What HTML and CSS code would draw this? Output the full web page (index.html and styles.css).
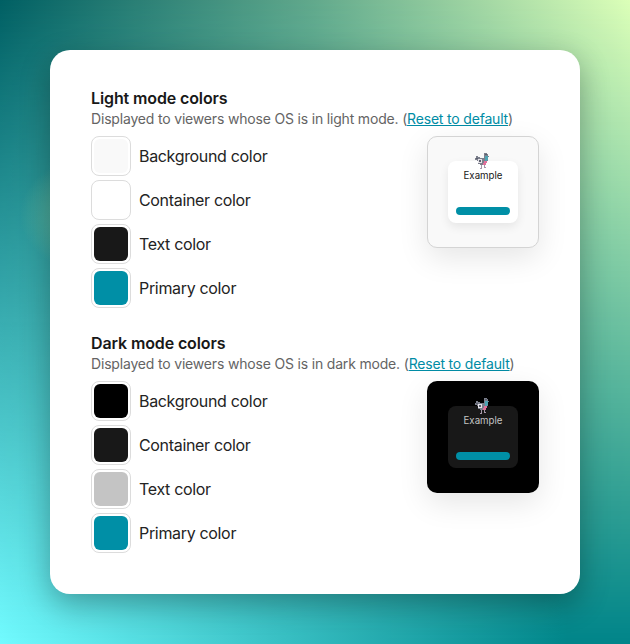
FILE: index.html
```html
<!DOCTYPE html>
<html lang="en">
<head>
<meta charset="utf-8">
<title>Theme colors</title>
<link rel="stylesheet" href="styles.css">
</head>
<body>
<svg class="defs" width="0" height="0" aria-hidden="true">
  <symbol id="pigeon" viewBox="0 0 16 16">
    <path fill="#7b7f8c" d="M9 0h3v1h1v2h1v1h-1v4h-1v2h-1v2H5v-1H3V8H2V7H0V5h1V3h2v1h2v1h4V1h0z"/>
    <path fill="#4fa3b2" d="M10 3h3v4h-1v1H10V6h0z"/>
    <path fill="#e0709a" d="M9 8h3v2h-1v2H8v-2h1z"/>
    <path fill="#e6e3e9" d="M3 6h4v4H3z"/>
    <path fill="#5b5f6c" d="M4 7h2v2H4zM10 1h2v1h-2zM1 5h2v1H1z"/>
    <path fill="#a596a8" d="M6 12h1v3H6zM9 12h1v2H9zM5 15h2v1H5zM9 14h2v1H9z"/>
  </symbol>
</svg>
<main class="card">
  <section class="group">
    <h2 class="title">Light mode colors</h2>
    <p class="hint">Displayed to viewers whose OS is in light mode. (<a class="reset" href="#">Reset to default</a>)</p>
    <div class="body">
      <ul class="rows">
        <li class="row"><span class="swatch"><span class="fill c-f9"></span></span>Background color</li>
        <li class="row"><span class="swatch"><span class="fill c-ff"></span></span>Container color</li>
        <li class="row"><span class="swatch"><span class="fill c-18"></span></span>Text color</li>
        <li class="row"><span class="swatch"><span class="fill c-pr"></span></span>Primary color</li>
      </ul>
      <div class="preview preview-light">
        <div class="mini">
          <svg class="bird"><use href="#pigeon"/></svg>
          <span class="mini-text">Example</span>
          <span class="mini-btn"></span>
        </div>
      </div>
    </div>
  </section>
  <section class="group">
    <h2 class="title">Dark mode colors</h2>
    <p class="hint">Displayed to viewers whose OS is in dark mode. (<a class="reset" href="#">Reset to default</a>)</p>
    <div class="body">
      <ul class="rows">
        <li class="row"><span class="swatch"><span class="fill c-00"></span></span>Background color</li>
        <li class="row"><span class="swatch"><span class="fill c-18"></span></span>Container color</li>
        <li class="row"><span class="swatch"><span class="fill c-c4"></span></span>Text color</li>
        <li class="row"><span class="swatch"><span class="fill c-pr"></span></span>Primary color</li>
      </ul>
      <div class="preview preview-dark">
        <div class="mini">
          <svg class="bird"><use href="#pigeon"/></svg>
          <span class="mini-text">Example</span>
          <span class="mini-btn"></span>
        </div>
      </div>
    </div>
  </section>
</main>
</body>
</html>
```
FILE: styles.css
```css
* { box-sizing: border-box; }
html, body { margin: 0; height: 100%; }
body {
  position: relative;
  width: 630px;
  height: 644px;
  overflow: hidden;
  padding: 50px;
  font-family: Inter, "Liberation Sans", sans-serif;
  color: #181818;
  background: linear-gradient(to right, #72fbff 0%, #38c0c4 45%, #00858a 90%, #00858a 100%);
}
body::before {
  content: "";
  position: absolute;
  inset: 0;
  background: linear-gradient(to right, #005f63 0%, #62a98c 50%, #dcffb8 100%);
  -webkit-mask-image: linear-gradient(to bottom, #000 0%, transparent 100%);
  mask-image: linear-gradient(to bottom, #000 0%, transparent 100%);
}
body::after {
  content: "";
  position: absolute;
  inset: 0;
  background: radial-gradient(95px 65px at 115px 215px, rgba(120,190,150,.55) 50%, rgba(120,190,150,0) 100%);
}
.defs { position: absolute; }
.card {
  position: relative;
  z-index: 1;
  width: 530px;
  height: 544px;
  padding: 39px 41px;
  background: #fff;
  border-radius: 20px;
  box-shadow: 0 10px 30px rgba(0,0,0,.3);
  display: flex;
  flex-direction: column;
  gap: 26px;
}
.title {
  margin: 0;
  font-size: 16px;
  line-height: 19px;
  font-weight: 600;
  letter-spacing: -0.12px;
  color: #181818;
}
.hint {
  margin: 1px 0 7px;
  font-size: 14px;
  line-height: 20px;
  letter-spacing: -0.18px;
  color: #646464;
}
.reset { color: #008ca5; text-decoration: underline; }
.body { display: flex; justify-content: space-between; align-items: flex-start; }
.rows { list-style: none; margin: 0; padding: 0; display: flex; flex-direction: column; gap: 4px; }
.row { display: flex; align-items: center; gap: 8px; height: 40px; font-size: 16px; letter-spacing: -0.33px; color: #232323; }
.swatch {
  width: 40px; height: 40px; padding: 2px;
  border: 1px solid #dcdcdc; border-radius: 8px; background: #fff;
  display: block;
}
.fill { display: block; width: 100%; height: 100%; border-radius: 6px; }
.c-f9 { background: #f9f9f9; }
.c-ff { background: #fff; }
.c-18 { background: #181818; }
.c-00 { background: #000; }
.c-c4 { background: #c4c4c4; }
.c-pr { background: #008fa6; }
.preview {
  width: 112px; height: 112px;
  border-radius: 10px;
  padding: 25px 21px 0;
  box-shadow: 0 10px 30px rgba(0,0,0,.1);
}
.preview-light { background: #f9f9f9; border: 1px solid #d4d4d4; padding: 24px 20px 0; }
.preview-dark { background: #000; }
.mini {
  position: relative;
  width: 70px; height: 62px;
  border-radius: 8px;
  padding: 9px 8px 0;
  display: flex; flex-direction: column; align-items: center;
}
.preview-light .mini { background: #fff; color: #181818; box-shadow: 0 4px 10px rgba(0,0,0,.08); }
.preview-dark .mini { background: #181818; color: #c4c4c4; }
.bird { position: absolute; left: 27px; top: -8px; width: 16px; height: 16px; }
.mini-text { font-size: 9.7px; line-height: 12px; }
.mini-btn { margin-top: auto; margin-bottom: 8px; width: 54px; height: 8px; border-radius: 4px; background: #008fa6; }
```
